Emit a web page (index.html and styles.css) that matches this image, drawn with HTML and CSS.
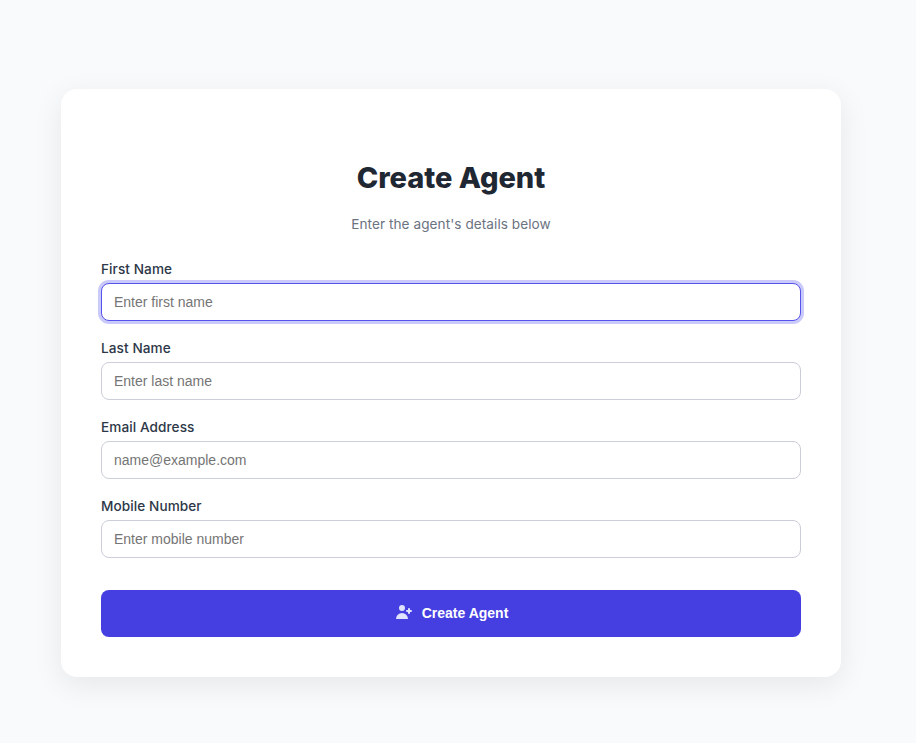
FILE: index.html
```html
<!DOCTYPE html>
<html lang="en">
<head>
<meta charset="utf-8">
<title>Create Agent</title>
<link rel="stylesheet" href="styles.css">
</head>
<body>
<main class="card">
  <h1 class="title">Create Agent</h1>
  <p class="subtitle">Enter the agent's details below</p>
  <form class="form">
    <div class="field"><label class="label" for="first">First Name</label><input class="input active" id="first" type="text" placeholder="Enter first name"></div>
    <div class="field"><label class="label" for="last">Last Name</label><input class="input" id="last" type="text" placeholder="Enter last name"></div>
    <div class="field"><label class="label" for="email">Email Address</label><input class="input" id="email" type="email" placeholder="name@example.com"></div>
    <div class="field"><label class="label" for="mobile">Mobile Number</label><input class="input" id="mobile" type="tel" placeholder="Enter mobile number"></div>
    <button class="submit" type="button">
      <svg class="icon" viewBox="0 0 20 20" fill="currentColor"><path d="M8 9a3 3 0 1 0 0-6 3 3 0 0 0 0 6zM8 11a6 6 0 0 1 6 6H2a6 6 0 0 1 6-6zM16 7a1 1 0 1 0-2 0v1h-1a1 1 0 1 0 0 2h1v1a1 1 0 1 0 2 0v-1h1a1 1 0 1 0 0-2h-1V7z"/></svg>
      <span>Create Agent</span>
    </button>
  </form>
</main>
</body>
</html>
```
FILE: styles.css
```css
* { box-sizing: border-box; }
body {
  margin: 0;
  padding: 89px 75px 66px 61px;
  background: #f8fafc;
  font-family: Inter, sans-serif;
  color: #1f2937;
}
.card {
  width: 780px;
  height: 588px;
  padding: 68px 40px 40px;
  background: #fff;
  border-radius: 16px;
  box-shadow: 0 8px 30px rgba(0, 0, 0, 0.08);
}
.title {
  margin: 0;
  font-size: 29px;
  line-height: 42px;
  font-weight: 800;
  letter-spacing: -0.05px;
  text-align: center;
  color: #1e2732;
}
.subtitle {
  margin: 14px 0 25px;
  font-size: 13.6px;
  line-height: 22px;
  letter-spacing: 0.06px;
  text-align: center;
  color: #6b7280;
}
.field { height: 79px; }
.label {
  display: block;
  height: 23px;
  font-size: 13.6px;
  line-height: 18px;
  font-weight: 500;
  letter-spacing: 0.08px;
  color: #2d3748;
}
.input {
  display: block;
  width: 100%;
  height: 38px;
  padding: 0 12px;
  border: 1px solid #cbced8;
  border-radius: 8px;
  font: 14px "Liberation Sans", Arial, sans-serif;
  outline: none;
}
.input.active {
  border-color: #5652ec;
  box-shadow: 0 0 0 3px #c9c9fa;
}
.submit {
  display: flex;
  align-items: center;
  justify-content: center;
  gap: 8px;
  width: 100%;
  height: 47px;
  margin-top: 14px;
  padding: 0 6px 2px;
  border: 0;
  border-radius: 8px;
  background: #453ee0;
  color: #fff;
  font: bold 14px "Liberation Sans", Arial, sans-serif;
}
.icon { width: 20px; height: 20px; margin-bottom: 1px; color: #dfe3ff; }
```
